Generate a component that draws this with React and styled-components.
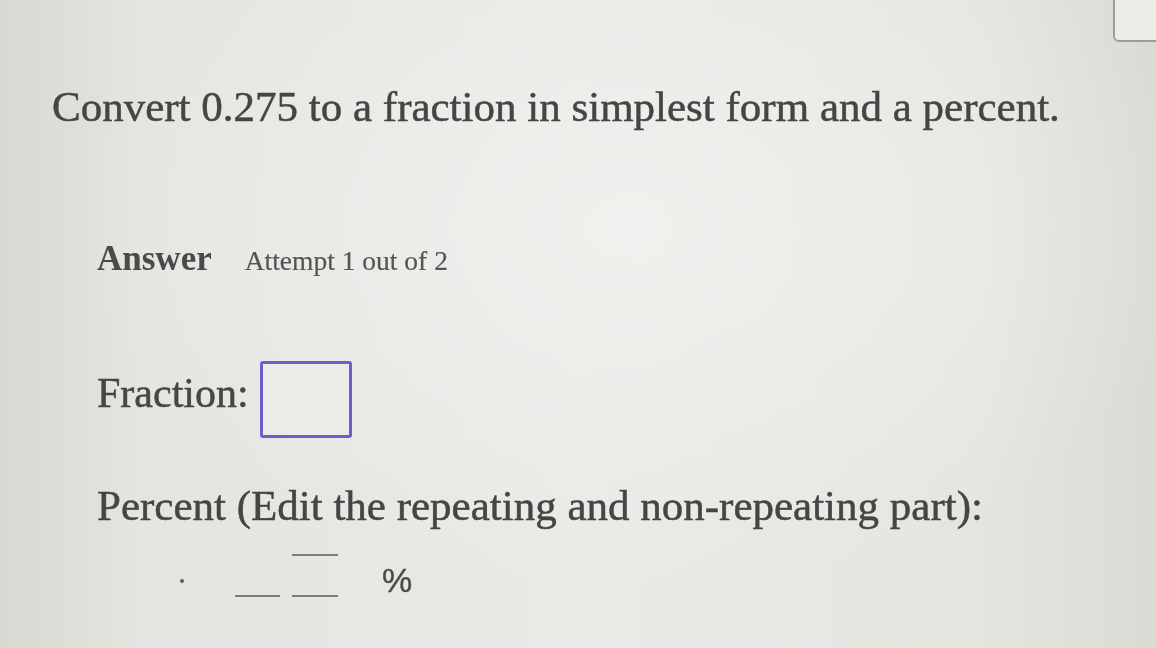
import React from "react";
import styled, { createGlobalStyle } from "styled-components";

const Global = createGlobalStyle`
  html, body { margin: 0; padding: 0; }
  body {
    width: 1156px;
    height: 648px;
    overflow: hidden;
    font-family: "Liberation Serif", "DejaVu Serif", serif;
    color: #4a4a4a;
    background:
      radial-gradient(ellipse 70% 80% at 55% 35%, rgba(241,241,239,0.85) 0%, rgba(241,241,239,0) 70%),
      linear-gradient(90deg, #d9d9d3 0%, #e4e4e0 12%, #e9e9e6 50%, #e5e5e0 85%, #dbdbd5 100%);
  }
`;

const Page = styled.div`
  width: 1156px;
  height: 648px;
  display: flex;
  flex-direction: column;
  filter: blur(0.4px);
`;

const TopBar = styled.div`
  display: flex;
  justify-content: flex-end;
  height: 40px;
`;

const CornerBox = styled.div`
  width: 60px;
  height: 46px;
  margin-top: -4px;
  margin-right: -17px;
  box-sizing: border-box;
  border: 2px solid #9c9c9a;
  border-radius: 0 0 0 6px;
  background: #ecece9;
`;

const Title = styled.h1`
  margin: 45px 0 0 52px;
  font-size: 43px;
  line-height: 1;
  font-weight: 400;
  white-space: nowrap;
  color: #454545;
  -webkit-text-stroke: 0.5px #454545;
`;

const AnswerRow = styled.div`
  display: flex;
  align-items: baseline;
  gap: 33px;
  margin: 113px 0 0 97px;
  line-height: 1;
`;

const AnswerLabel = styled.span`
  font-size: 35px;
  font-weight: 700;
  color: #4a4a4a;
`;

const Attempt = styled.span`
  font-size: 27.5px;
  color: #555;
  -webkit-text-stroke: 0.2px #555;
`;

const FractionRow = styled.div`
  display: flex;
  align-items: flex-start;
  gap: 11px;
  margin: 85px 0 0 97px;
`;

const Label = styled.span`
  margin-top: 11px;
  font-size: 42px;
  line-height: 1;
  color: #464646;
  -webkit-text-stroke: 0.5px #464646;
  white-space: nowrap;
`;

const FractionInput = styled.div`
  width: 92px;
  height: 77px;
  box-sizing: border-box;
  border: 3px solid #6c5fc9;
  border-radius: 3px;
  background: #ebebe8;
`;

const PercentLabel = styled.div`
  margin: 46px 0 0 97px;
  font-size: 43px;
  line-height: 1;
  color: #454545;
  -webkit-text-stroke: 0.5px #454545;
  white-space: nowrap;
`;

const DecimalRow = styled.div`
  display: flex;
  align-items: flex-end;
  margin: 0 0 0 180px;
  height: 70px;
`;

const Dot = styled.span`
  width: 4px;
  height: 4px;
  border-radius: 50%;
  background: #5e5e5e;
  margin-bottom: 14px;
  margin-right: 51px;
`;

const Slot = styled.div`
  width: ${(p) => p.$w}px;
  height: 43px;
  box-sizing: border-box;
  border-bottom: 2px solid #7c7c7c;
  border-top: ${(p) => (p.$repeating ? "2px solid #7c7c7c" : "none")};
  margin-right: ${(p) => p.$gap || 0}px;
`;

const Percent = styled.span`
  font-family: "Liberation Sans", "DejaVu Sans", sans-serif;
  font-size: 34px;
  line-height: 1;
  color: #4a4a4a;
  -webkit-text-stroke: 0.4px #4a4a4a;
`;

export default function App() {
  return (
    <>
      <Global />
      <Page>
        <TopBar>
          <CornerBox />
        </TopBar>
        <Title>Convert 0.275 to a fraction in simplest form and a percent.</Title>
        <AnswerRow>
          <AnswerLabel>Answer</AnswerLabel>
          <Attempt>Attempt 1 out of 2</Attempt>
        </AnswerRow>
        <FractionRow>
          <Label>Fraction:</Label>
          <FractionInput />
        </FractionRow>
        <PercentLabel>Percent (Edit the repeating and non-repeating part):</PercentLabel>
        <DecimalRow>
          <Dot />
          <Slot $w={45} $gap={12} />
          <Slot $w={46} $gap={44} $repeating />
          <Percent>%</Percent>
        </DecimalRow>
      </Page>
    </>
  );
}
